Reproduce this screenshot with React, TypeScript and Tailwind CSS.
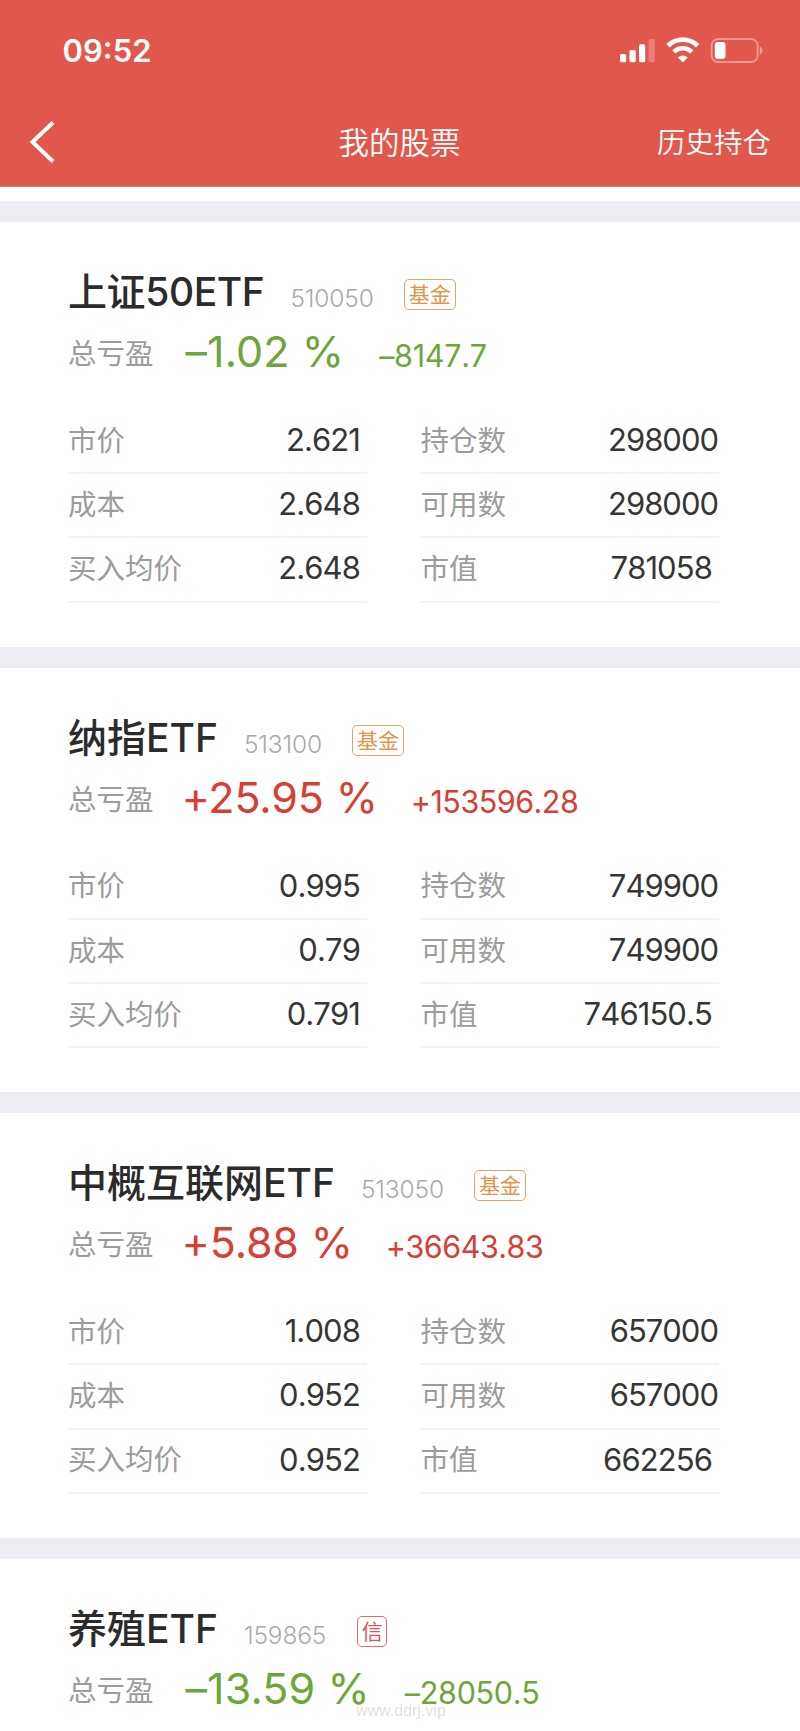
type Holding = {
  name: string;
  code: string;
  tag: string;
  tone: "fund" | "credit";
  up: boolean;
  percent: string;
  amount: string;
  left?: string[];
  right?: string[];
  nameSpacing?: string;
};

const holdings: Holding[] = [
  {
    name: "上证50ETF",
    code: "510050",
    tag: "基金",
    tone: "fund",
    up: false,
    percent: "–1.02 %",
    amount: "–8147.7",
    left: ["2.621", "2.648", "2.648"],
    right: ["298000", "298000", "781058"],
    nameSpacing: "tracking-[-0.4px]",
  },
  {
    name: "纳指ETF",
    code: "513100",
    tag: "基金",
    tone: "fund",
    up: true,
    percent: "+25.95 %",
    amount: "+153596.28",
    left: ["0.995", "0.79", "0.791"],
    right: ["749900", "749900", "746150.5"],
  },
  {
    name: "中概互联网ETF",
    code: "513050",
    tag: "基金",
    tone: "fund",
    up: true,
    percent: "+5.88 %",
    amount: "+36643.83",
    left: ["1.008", "0.952", "0.952"],
    right: ["657000", "657000", "662256"],
  },
  {
    name: "养殖ETF",
    code: "159865",
    tag: "信",
    tone: "credit",
    up: false,
    percent: "–13.59 %",
    amount: "–28050.5",
  },
];

const leftLabels = ["市价", "成本", "买入均价"];
const rightLabels = ["持仓数", "可用数", "市值"];

function StatusIcons() {
  return (
    <svg width="144" height="28" viewBox="0 0 144 28" fill="none">
      <rect x="1" y="18" width="6.2" height="8.2" rx="1.5" fill="#fff" />
      <rect x="10.5" y="14" width="6.2" height="12.2" rx="1.5" fill="#fff" />
      <rect x="20" y="8.2" width="6.2" height="18" rx="1.5" fill="#fff" />
      <rect x="29.6" y="3" width="6.2" height="23.2" rx="1.5" fill="#fff" fillOpacity=".25" />
      <path d="M49 9.7a21.3 21.3 0 0 1 29.6 0" stroke="#fff" strokeWidth="4.8" />
      <path d="M54.8 15.9a13 13 0 0 1 18 0" stroke="#fff" strokeWidth="4.4" />
      <path d="M63.8 26.4l-4.8-5a6.9 6.9 0 0 1 9.6 0z" fill="#fff" />
      <rect x="92.6" y="3" width="46" height="23" rx="6.5" stroke="#fff" strokeOpacity=".4" strokeWidth="1.8" />
      <rect x="95.8" y="6" width="10.7" height="17" rx="3.2" fill="#fff" />
      <path d="M140.8 10.5v8c3.4-1.6 3.4-6.4 0-8z" fill="#fff" fillOpacity=".45" />
    </svg>
  );
}

function Column({
  labels,
  values,
  right,
}: {
  labels: string[];
  values: string[];
  right?: boolean;
}) {
  return (
    <div className="w-[299px]">
      {labels.map((label, i) => (
        <div
          key={label}
          className="flex h-[64.2px] items-center justify-between border-b-2 border-[#f3f3f3]"
        >
          <span className={"text-[28.5px] leading-none text-[#9c9c9c] " + (right ? "pl-[0.5px]" : "")}>{label}</span>
          <span
            className={
              "pb-[3px] text-[31px] leading-none text-[#363636] [font-kerning:none] " +
              (right && i < 2 ? "pr-px tracking-[-1px]" : "pr-[7px] tracking-[-0.9px]")
            }
          >
            {values[i]}
          </span>
        </div>
      ))}
    </div>
  );
}

function Card({ item }: { item: Holding }) {
  return (
    <section className="shrink-0 border-b-[21px] border-[#eeedf3] bg-white px-[68px] pt-[44px] last-of-type:border-b-0">
      <div className="flex h-[54px] items-center whitespace-nowrap">
        <h2 className={"mb-[3px] text-[39px] leading-none font-medium text-[#2b2b2b] " + (item.nameSpacing ?? "")}>
          {item.name}
        </h2>
        <span className="mt-[11px] ml-[26px] text-[24.5px] leading-none font-light tracking-[-0.15px] text-[#aaa]">
          {item.code}
        </span>
        <span
          className={
            "mt-[3px] flex h-[31px] items-center justify-center rounded-[5px] border-[1.5px] text-[21px] leading-none " +
            (item.tone === "fund"
              ? "ml-[30px] w-[52px] border-[#e3a468] text-[#e0944c]"
              : "ml-[31px] w-[30px] border-[#dd6a70] text-[#d8575e]")
          }
        >
          {item.tag}
        </span>
      </div>
      <div className={"flex h-[60px] items-center whitespace-nowrap " + (item.up ? "text-[#d63f35]" : "text-[#6ea63c]")}>
        <span className="mt-[9px] text-[28.5px] leading-none text-[#9c9c9c]">总亏盈</span>
        <div className="mt-[3px] flex items-baseline">
          <span className={"text-[43px] leading-none " + (item.up ? "ml-[28px] tracking-[-0.15px]" : "ml-[32px] tracking-[0.1px]")}>
            {item.percent}
          </span>
          <span
            className={
              "text-[30.5px] leading-none [font-kerning:none] " +
              (item.up ? "ml-[33px] tracking-[-0.5px]" : "ml-[35px] tracking-[-0.3px]")
            }
          >
            {item.amount}
          </span>
        </div>
      </div>
      {item.left && item.right && (
        <div className="mt-[30px] mb-[44px] flex justify-between pr-[13px]">
          <Column labels={leftLabels} values={item.left} />
          <Column labels={rightLabels} values={item.right} right />
        </div>
      )}
    </section>
  );
}

export default function App() {
  return (
    <div className="relative flex h-[1731px] w-[800px] flex-col overflow-hidden bg-white font-['Inter','Noto_Sans_CJK_SC',sans-serif]">
      <header className="h-[187px] shrink-0 border-b border-[#c9807a] bg-[#e2574c] text-white">
        <div className="flex h-[100px] items-center justify-between pr-[37px] pl-[62.5px]">
          <span className="text-[31px] leading-none font-semibold">09:52</span>
          <StatusIcons />
        </div>
        <div className="grid h-[84px] grid-cols-[1fr_auto_1fr] items-center pr-[29px] pl-[28px]">
          <svg width="28" height="44" viewBox="0 0 28 44" fill="none">
            <path d="M25 2.5L4.5 22 25 41.5" stroke="#fff" strokeWidth="4" />
          </svg>
          <h1 className="pt-[2px] text-[30.5px] font-[350]">我的股票</h1>
          <span className="justify-self-end pt-[2px] text-[28.5px] font-[350]">历史持仓</span>
        </div>
      </header>
      <div className="h-[35px] shrink-0 border-b-[21px] border-[#eeedf3]" />
      {holdings.map((item) => (
        <Card key={item.code} item={item} />
      ))}
      <span className="absolute top-[1701px] left-[356px] text-[16px] leading-[20px] text-black/15 font-['Liberation_Sans',sans-serif]">
        www.ddrj.vip
      </span>
    </div>
  );
}
